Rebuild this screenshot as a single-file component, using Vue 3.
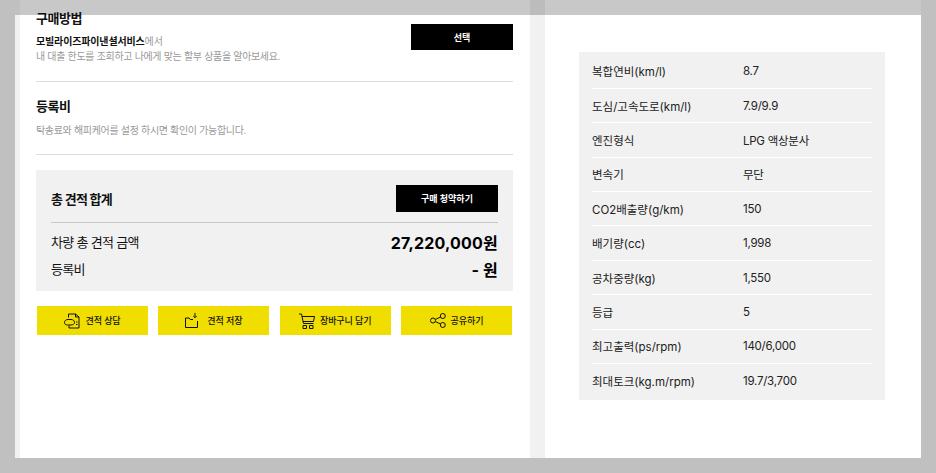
<template>
  <div class="page">
    <div class="topveil"><span class="veil-gap"></span></div>
    <div class="sheet">
      <section class="left">
        <div class="buy">
          <div class="buy-text">
            <h3 class="h">구매방법</h3>
            <p class="line1"><b>모빌라이즈파이낸셜서비스</b>에서</p>
            <p class="desc">내 대출 한도를 조회하고 나에게 맞는 할부 상품을 알아보세요.</p>
          </div>
          <button class="black sel">선택</button>
        </div>
        <div class="reg">
          <h3 class="h">등록비</h3>
          <p class="desc reg-desc">탁송료와 해피케어를 설정 하시면 확인이 가능합니다.</p>
        </div>
        <div class="sum">
          <div class="sum-head">
            <h4>총 견적 합계</h4>
            <button class="black apply">구매 청약하기</button>
          </div>
          <div class="sum-row first"><span>차량 총 견적 금액</span><strong>27,220,000원</strong></div>
          <div class="sum-row"><span>등록비</span><strong>- 원</strong></div>
        </div>
        <div class="actions">
          <button class="act">
            <svg width="16" height="16" viewBox="0 0 16 16" fill="none" stroke="#111" stroke-width="1">
              <path d="M4.500 4.500V1h7l3.500 3v11H5v-2.500" /><path d="M11.500 1v3H15" />
              <path d="M.5 9.500c0-2 1.500-3 3.500-3h3c2 0 3.500 1 3.500 3 0 1.500-1.500 2.500-3.500 2.500H3.500C1.500 12 .5 11 .5 9.500z" />
              <path d="M12 9h1.500M12 11.500h1.500" />
            </svg>
            견적 상담
          </button>
          <button class="act gap9">
            <svg width="13" height="15" viewBox="0 0 13 15" fill="none" stroke="#111" stroke-width="1">
              <path d="M.5 14.500V5h3.500l1.300 1.500H8M12.500 8v6.500H.5" /><path d="M10 0v4.500M8.300 3l1.700 1.700L11.700 3" />
            </svg>
            견적 저장
          </button>
          <button class="act">
            <svg width="16" height="16" viewBox="0 0 16 16" fill="none" stroke="#111" stroke-width="1">
              <path d="M0 1h2.500l2 9.500h10" /><path d="M3 3.500h12.500l-1 5H4" /><path d="M4 12.500h3.500v3H4zM10.500 12.500H14v3h-3.500z" />
            </svg>
            장바구니 담기
          </button>
          <button class="act">
            <svg width="16" height="15" viewBox="0 0 16 15" fill="none" stroke="#111" stroke-width="1">
              <circle cx="3" cy="7.500" r="2.500" /><circle cx="12.800" cy="3" r="2.500" /><circle cx="12.800" cy="12" r="2.500" />
              <path d="M5.300 6.500l5.300-2.500M5.300 8.500l5.300 2.500" />
            </svg>
            공유하기
          </button>
        </div>
      </section>
      <div class="divider"></div>
      <section class="right">
        <div class="spec">
          <div v-for="r in rows" :key="r[0]" class="spec-row">
            <span class="k">{{ r[0] }}</span><span class="v">{{ r[1] }}</span>
          </div>
        </div>
      </section>
    </div>
  </div>
</template>

<script setup>
const rows = [
  ['복합연비(km/l)', '8.7'],
  ['도심/고속도로(km/l)', '7.9/9.9'],
  ['엔진형식', 'LPG 액상분사'],
  ['변속기', '무단'],
  ['CO2배출량(g/km)', '150'],
  ['배기량(cc)', '1,998'],
  ['공차중량(kg)', '1,550'],
  ['등급', '5'],
  ['최고출력(ps/rpm)', '140/6,000'],
  ['최대토크(kg.m/rpm)', '19.7/3,700'],
]
</script>

<style>
html, body { margin: 0; background: #c0c0c0; }
</style>

<style scoped>
* { box-sizing: border-box; }
.page {
  position: relative;
  width: 936px;
  height: 473px;
  overflow: hidden;
  background: #c0c0c0;
  padding: 15px;
  font-family: "Inter", "Noto Sans CJK KR", sans-serif;
  color: #111;
}
.topveil {
  position: absolute;
  left: 20px;
  top: 0;
  width: 901px;
  height: 15px;
  background: #c8c8c8;
}
.veil-gap {
  position: absolute;
  left: 510px;
  top: 0;
  width: 15px;
  height: 15px;
  background: #bcbcbc;
}
.sheet {
  position: relative;
  display: flex;
  width: 906px;
  height: 443px;
  background: #fff;
}
.left {
  width: 515px;
  border-left: 5px solid #f1f1f1;
  padding: 0 17px 0 16px;
}
.divider { width: 15px; background: #f1f1f1; }
.right { flex: 1; padding: 37px 36px 0 34px; }
h3, h4, p { margin: 0; }
.h {
  font-size: 13px;
  font-weight: 700;
  line-height: 18px;
  letter-spacing: -0.5px;
  color: #111;
}
.buy {
  border-bottom: 1px solid #dcdcdc;
  display: flex;
  justify-content: space-between;
  margin-top: -6px;
  height: 73px;
}
.line1 { font-size: 10px; line-height: 14px; margin-top: 7px; color: #999; letter-spacing: -0.15px; }
.line1 b { color: #111; font-weight: 700; }
.desc { font-size: 10px; line-height: 14px; color: #999; letter-spacing: -0.33px; }
.buy .desc { margin-top: 1px; }
.black {
  border: 0;
  background: #000;
  color: #fff;
  font: 700 9px/1 "Inter", "Noto Sans CJK KR", sans-serif;
  padding: 0;
}
.sel { width: 102px; height: 26px; margin-top: 15px; }
.reg {
  height: 73px;
  border-bottom: 1px solid #dcdcdc;
  padding-top: 15px;
}
.reg-desc { margin-top: 8px; }
.sum {
  margin-top: 15px;
  height: 121px;
  background: #f1f1f1;
  padding: 15px 15px 0;
}
.sum-head {
  display: flex;
  justify-content: space-between;
  align-items: center;
  height: 38px;
  padding-bottom: 11px;
  border-bottom: 1px solid #c8c8c8;
}
.sum-head h4 { font-size: 13px; font-weight: 700; letter-spacing: -0.7px; }
.apply { width: 102px; height: 27px; }
.sum-row {
  display: flex;
  justify-content: space-between;
  align-items: center;
  height: 27px;
  font-size: 13px;
  letter-spacing: -0.7px;
}
.sum-row.first { margin-top: 5px; }
.sum-row strong { font-size: 16px; font-weight: 700; color: #000; letter-spacing: 0.2px; }
.actions {
  display: flex;
  justify-content: space-between;
  margin: 15px 1px 0;
}
.act {
  width: 111px;
  height: 29px;
  border: 0;
  padding: 0;
  background: #f0de00;
  color: #111;
  display: flex;
  align-items: center;
  justify-content: center;
  gap: 5px;
  letter-spacing: -0.1px;
  font: 500 9px/1 "Inter", "Noto Sans CJK KR", sans-serif;
}
.gap9 { gap: 9px; }
.spec {
  background: #f1f1f1;
  height: 348px;
  padding: 2.500px 13px 0;
}
.spec-row {
  display: flex;
  align-items: center;
  height: 34.400px;
  border-bottom: 1px solid #fff;
  font-size: 11.500px;
  color: #222;
}
.spec-row:last-child { border-bottom: 0; }
.k { width: 151px; }
.v { letter-spacing: -0.25px; }
</style>
